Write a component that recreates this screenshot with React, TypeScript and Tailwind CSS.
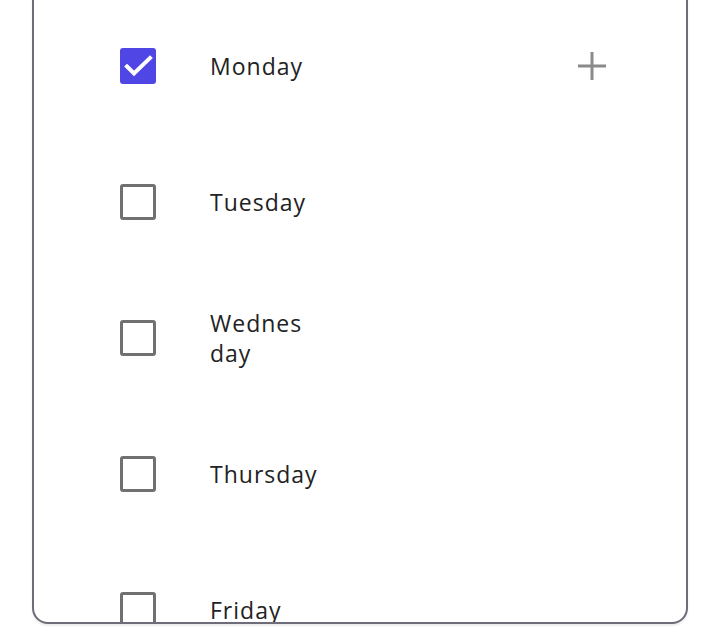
import { useState } from "react"

const days = ["Monday", "Tuesday", "Wednesday", "Thursday", "Friday"]

function Label({ day }: { day: string }) {
  if (day === "Wednesday") {
    return (
      <span>
        Wednes
        <wbr />
        day
      </span>
    )
  }
  return <span>{day}</span>
}

export default function App() {
  const [checked, setChecked] = useState<string[]>(["Monday"])

  const toggle = (d: string) =>
    setChecked((c) => (c.includes(d) ? c.filter((x) => x !== d) : [...c, d]))

  return (
    <div className="h-[641px] w-[720px] overflow-hidden bg-white px-[32px] font-['Open_Sans','Noto_Sans',sans-serif]">
      <div className="-mt-[20px] h-[644px] overflow-hidden rounded-b-[16px] border-2 border-[#6e6c78] bg-white pl-[86px] pr-[78px] pt-[16px] shadow-[0_2px_2px_rgba(0,0,0,0.08)]">
        {days.map((d) => {
          const on = checked.includes(d)
          return (
            <div key={d} className="flex h-[136px] items-center">
              <button
                onClick={() => toggle(d)}
                className={
                  on
                    ? "h-[36px] w-[36px] shrink-0 rounded-[3px] bg-[#4f46e5]"
                    : "h-[36px] w-[36px] shrink-0 rounded-[3px] border-[3px] border-[#707070] bg-white"
                }
              >
                {on && (
                  <svg width="36" height="36" viewBox="0 0 36 36" fill="none">
                    <path d="M7 18.5l7 7L30 10" stroke="white" strokeWidth="4" strokeLinecap="square" />
                  </svg>
                )}
              </button>
              <div className="ml-[54px] w-[120px] text-[23px] leading-[30px] tracking-[1px] text-[#222222]">
                <Label day={d} />
              </div>
              <div className="flex-1" />
              {d === "Monday" && (
                <svg width="32" height="32" viewBox="0 0 32 32" className="shrink-0">
                  <path d="M16 2v28M2 16h28" stroke="#8a8a8a" strokeWidth="3" />
                </svg>
              )}
            </div>
          )
        })}
      </div>
    </div>
  )
}
